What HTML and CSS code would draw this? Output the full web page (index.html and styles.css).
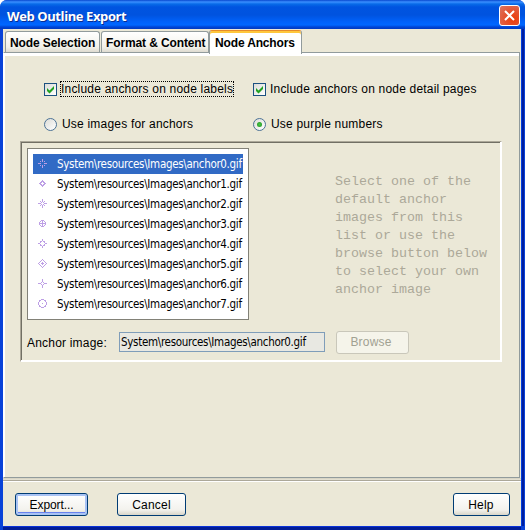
FILE: index.html
```html
<!DOCTYPE html>
<html lang="en">
<head>
<meta charset="utf-8">
<title>Web Outline Export</title>
<link rel="stylesheet" href="styles.css">
</head>
<body>
<div class="window">
  <header class="titlebar">
    <h1>Web Outline Export</h1>
    <button class="close" aria-label="Close"><svg width="11" height="11" viewBox="0 0 11 11"><path d="M1 1l9 9M10 1l-9 9" stroke="#fff" stroke-width="2"/></svg></button>
  </header>
  <main class="client">
    <nav class="tabs">
      <div class="tab tab-nodes"><span>Node Selection</span></div>
      <div class="tab tab-format"><span>Format &amp; Content</span></div>
      <div class="tab tab-active"><span>Node Anchors</span></div>
    </nav>
    <section class="page">
      <div class="options">
        <label class="option"><i class="check"><svg width="9" height="9" viewBox="0 0 9 9"><path d="M1 3v3l2.500 2.500L8 4V1L3.500 5.500z" fill="#21a121"/></svg></i><span class="focus">Include anchors on node labels</span></label>
        <label class="option"><i class="check"><svg width="9" height="9" viewBox="0 0 9 9"><path d="M1 3v3l2.500 2.500L8 4V1L3.500 5.500z" fill="#21a121"/></svg></i><span class="pages">Include anchors on node detail pages</span></label>
        <label class="option"><i class="radio"></i><span>Use images for anchors</span></label>
        <label class="option"><i class="radio on"></i><span>Use purple numbers</span></label>
      </div>
      <div class="panel">
        <div class="choose">
          <ul class="list">
            <li class="selected"><svg viewBox="0 0 9 9"><path d="M4.500 0v3M4.500 6v3M0 4.500h3M6 4.500h3"/><path d="M2 2h1v1h-1zM6 2h1v1h-1zM2 6h1v1h-1zM6 6h1v1h-1z" class="dot"/></svg><span>System\resources\Images\anchor0.gif</span></li>
            <li><svg viewBox="0 0 9 9"><path d="M4 1h1v1h1v1h1v1h1v1h-1v1h-1v1h-1v1h-1v-1h-1v-1h-1v-1h-1v-1h1v-1h1v-1h1zM4 3v1h-1v1h1v1h1v-1h1v-1h-1v-1z" fill-rule="evenodd" class="dot"/></svg><span>System\resources\Images\anchor1.gif</span></li>
            <li><svg viewBox="0 0 9 9"><path d="M4.500 0v3M4.500 6v3M0 4.500h3M6 4.500h3"/><path d="M2 2h1v1h-1zM3 3h1v1h-1zM6 2h1v1h-1zM5 3h1v1h-1zM3 5h1v1h-1zM2 6h1v1h-1zM5 5h1v1h-1zM6 6h1v1h-1z" class="dot"/></svg><span>System\resources\Images\anchor2.gif</span></li>
            <li><svg viewBox="0 0 9 9"><path d="M3 1.500h3M3 7.500h3M1.500 3v3M7.500 3v3M4.500 1v7M1 4.500h7"/><path d="M2 2h1v1h-1zM6 2h1v1h-1zM2 6h1v1h-1zM6 6h1v1h-1z" class="dot"/></svg><span>System\resources\Images\anchor3.gif</span></li>
            <li><svg viewBox="0 0 9 9"><path d="M4.500 0v2M4.500 7v2M0 4.500h2M7 4.500h2"/><path d="M3 2h1v1h-1zM5 2h1v1h-1zM2 2h1v2h-1zM6 2h1v2h-1zM2 5h1v2h-1zM6 5h1v2h-1zM3 6h1v1h-1zM5 6h1v1h-1z" class="dot"/></svg><span>System\resources\Images\anchor4.gif</span></li>
            <li><svg viewBox="0 0 9 9"><path d="M4.500 3v3M3 4.500h3"/><path d="M4 0h1v1h-1zM3 1h1v1h-1zM5 1h1v1h-1zM2 2h1v1h-1zM6 2h1v1h-1zM1 3h1v1h-1zM7 3h1v1h-1zM0 4h1v1h-1zM8 4h1v1h-1zM1 5h1v1h-1zM7 5h1v1h-1zM2 6h1v1h-1zM6 6h1v1h-1zM3 7h1v1h-1zM5 7h1v1h-1zM4 8h1v1h-1z" class="dot"/></svg><span>System\resources\Images\anchor5.gif</span></li>
            <li><svg viewBox="0 0 9 9"><path d="M4.500 0v3M4.500 6v3M0 4.500h3M6 4.500h3"/><path d="M3 3h1v1h-1zM5 3h1v1h-1zM3 5h1v1h-1zM5 5h1v1h-1z" class="dot"/></svg><span>System\resources\Images\anchor6.gif</span></li>
            <li><svg viewBox="0 0 9 9"><path d="M3 .5h3M3 8.500h3M.5 3v3M8.500 3v3"/><path d="M1 1h2v1h-1v1h-1zM6 1h2v2h-1v-1h-1zM1 6h1v1h1v1h-2zM7 6h1v2h-2v-1h1zM4 4h1v1h-1z" class="dot"/></svg><span>System\resources\Images\anchor7.gif</span></li>
          </ul>
          <p class="hint">Select one of the<br>default anchor<br>images from this<br>list or use the<br>browse button below<br>to select your own<br>anchor image</p>
        </div>
        <div class="source">
          <span class="source-label">Anchor image:</span>
          <div class="field"><span>System\resources\Images\anchor0.gif</span></div>
          <button class="btn browse" disabled>Browse</button>
        </div>
      </div>
    </section>
    <footer class="actions">
      <button class="btn export">Export...</button>
      <button class="btn cancel">Cancel</button>
      <button class="btn help">Help</button>
    </footer>
  </main>
</div>
</body>
</html>
```
FILE: styles.css
```css
* { box-sizing: border-box; }
body { margin: 0; width: 525px; height: 530px; overflow: hidden; background: #fff; font: 12px/16px "Liberation Sans", Arial, sans-serif; color: #000; }
.window { height: 530px; display: flex; flex-direction: column; border-radius: 7px 7px 0 0; overflow: hidden; background: #0842d8; }
.titlebar { flex: 0 0 29px; display: flex; align-items: flex-start; justify-content: space-between; padding: 5px 5px 0 7px; background: linear-gradient(#0848ce 0, #3a8fff 2px, #086be8 4px, #0054e0 7px, #0053df 15px, #0062fb 22px, #0067ff 25px, #0045d5 27px, #003ac0 29px); }
h1 { margin: 3px 0 0; font: bold 13px/16px "Open Sans", "Noto Sans", sans-serif; letter-spacing: -.4px; color: #fff; text-shadow: 1px 1px #0a2e91; white-space: nowrap; }
.close { width: 21px; height: 21px; padding: 0; display: flex; align-items: center; justify-content: center; border: 1px solid #fff; border-radius: 3px; background: radial-gradient(circle at 70% 70%, #ed3c08 0, #e45230 45%, #d97563 100%); }
.client { flex: 1; display: flex; flex-direction: column; margin: 0 4px 4px 3px; background: #ebe8d7; box-shadow: 1px 0 #003ddc, 3px 0 #001ea0, 0 1px #0831d9, 0 4px #001c96; }
.tabs { flex: 0 0 23px; display: flex; align-items: flex-end; padding-left: 2px; }
.tab { height: 21px; padding: 4px 0 0 4px; border: 1px solid #919b9c; border-bottom: 0; border-radius: 3px 3px 0 0; background: linear-gradient(#fff, #f2f1ea 75%, #dedbd0); font-weight: bold; line-height: 15px; white-space: nowrap; letter-spacing: -.1px; }
.tab-nodes { width: 95px; margin-right: 1px; }
.tab-format { width: 108px; letter-spacing: -.12px; }
.tab-active { position: relative; z-index: 1; height: 24px; width: 93px; margin-bottom: -2px; padding: 4px 0 0 5px; border-top: 1px solid #e68b2c; background: #fff; box-shadow: inset 0 2px #ffc73c; line-height: 16px; letter-spacing: -.15px; }
.page { flex: 1; margin-right: 1px; border: 1px solid #919b9c; border-left-color: #fff; box-shadow: inset 1px 3px #fff; padding: 28px 17px 0 16px; }
.options { display: grid; grid-template-columns: 209px 1fr; grid-template-rows: 16px 16px; row-gap: 19px; padding-left: 24px; }
.option { display: flex; align-items: center; white-space: nowrap; }
.option span { letter-spacing: .2px; margin-left: 5px; }
.option .pages { margin-left: 4px; }
.option .focus { margin-left: 3px; padding: 0 1px; outline: 1px dotted #000; outline-offset: -1px; }
.check, .radio { flex: 0 0 13px; height: 13px; border: 1px solid #1c5180; background: linear-gradient(135deg, #dcdcd7, #fff); display: flex; align-items: center; justify-content: center; }
.radio { border-radius: 50%; border-color: #4c7296; }
.on::after { content: ""; width: 5px; height: 5px; border-radius: 50%; background: radial-gradient(#45c545, #219121); }
.panel { height: 221px; margin-top: 9px; border: 1px solid #aca899; border-right-color: #fff; border-bottom-color: #fff; box-shadow: inset -1px -1px #fff, inset 1px 1px #716f64; padding: 6px 9px 0 6px; }
.choose { display: flex; }
.list { list-style: none; margin: 0; width: 222px; height: 172px; padding: 5px; border: 1px solid #828177; background: #fff; }
li { height: 20px; display: flex; align-items: center; padding-left: 5px; white-space: nowrap; }
li svg { width: 9px; height: 9px; flex: none; margin: 0 10px 1px 0; shape-rendering: crispEdges; fill: none; stroke: #bd9fe5; stroke-width: 1; }
li svg .dot { fill: #bd9fe5; stroke: none; }
.selected { background: #316ac5; color: #fff; }
li span, .field { font-family: "DejaVu Sans Condensed", "DejaVu Sans", sans-serif; font-stretch: condensed; font-size: 11.500px; letter-spacing: -.31px; }
.hint { margin: 25px 0 0 86px; font: 13.330px/18px "Liberation Mono", monospace; color: #aca899; white-space: nowrap; }
.source { display: flex; align-items: center; margin-top: 11px; }
.source-label { width: 92px; white-space: nowrap; letter-spacing: .2px; }
.field { width: 206px; height: 20px; margin-bottom: 1px; padding: 1px; border: 1px solid #7f9db9; background: #e8e8e2; white-space: nowrap; }
.btn { height: 23px; margin: 0; padding: 0; border: 1px solid #003c74; border-radius: 3px; background: linear-gradient(#fff, #f3f2ed 75%, #d9d6c9); font: 12px/16px "Liberation Sans", Arial, sans-serif; letter-spacing: .2px; color: #000; }
.browse { width: 73px; margin-left: 11px; border-color: #c9c7ba; background: #f5f4ea; color: #a1a192; padding: 0 3px 1px 0; }
.actions { flex: 0 0 48px; display: flex; align-items: flex-start; padding: 14px 11px 0 12px; border-top: 1px solid #d8d5c5; box-shadow: inset 0 1px #e2dfd0, inset 0 2px #aca899, inset 0 3px #fff; }
.export { width: 73px; letter-spacing: -.1px; box-shadow: inset 0 0 0 2px #a9c3f4, inset 0 -3px #6982ee; }
.cancel { width: 69px; margin-left: 29px; }
.help { width: 57px; margin-left: auto; padding-right: 1px; }
```
